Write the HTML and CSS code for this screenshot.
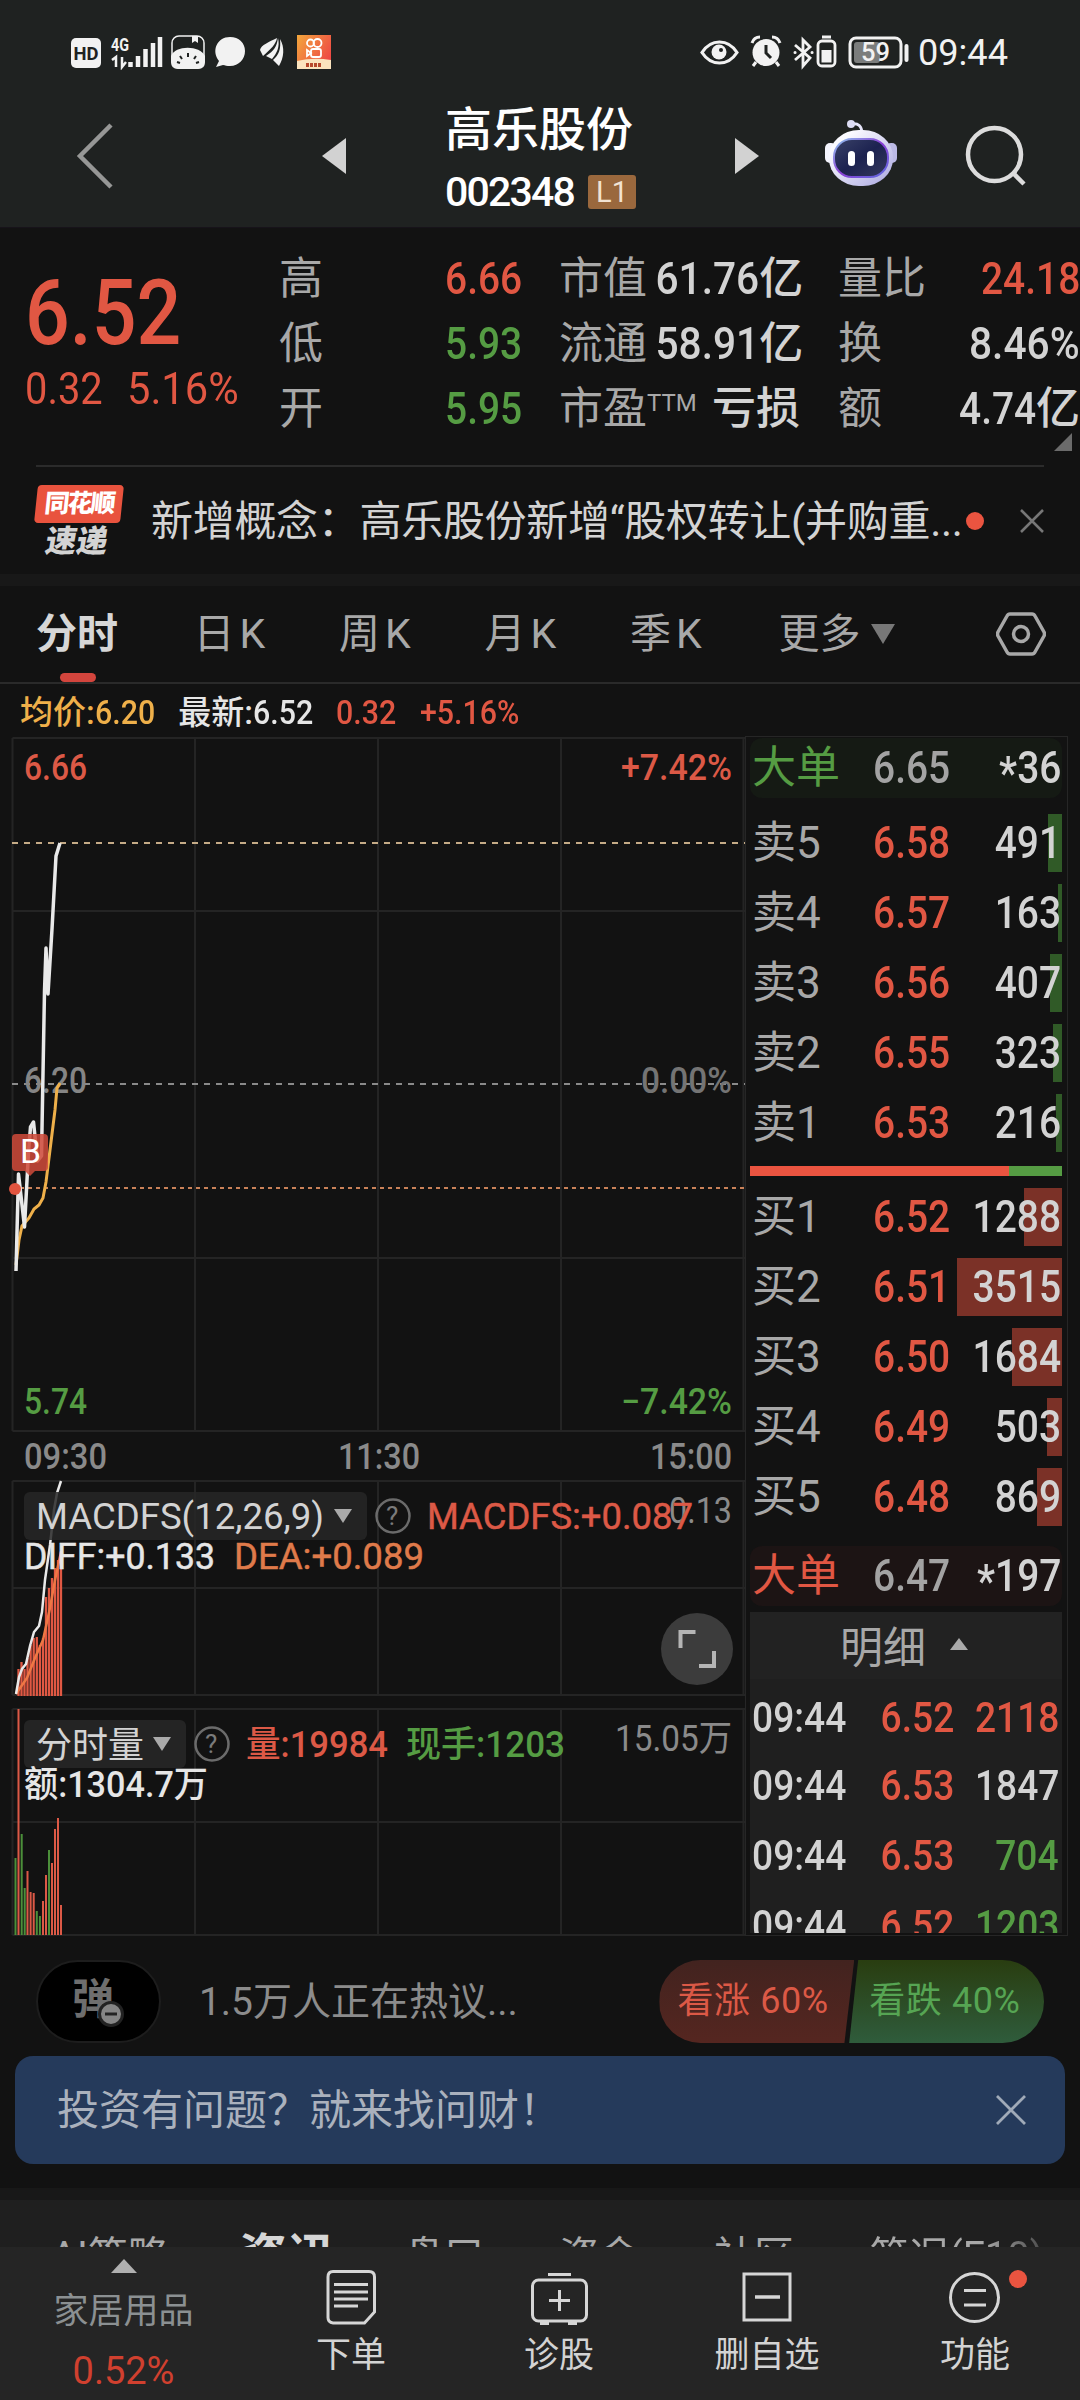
FILE: index.html
```html
<!DOCTYPE html>
<html lang="zh-CN">
<head>
  <meta charset="UTF-8">
  <meta name="viewport" content="width=device-width, initial-scale=1.0">
  <link rel="stylesheet" href="styles.css">
  <title>高乐股份 002348</title>
</head>
<body>
  <div class="phone">
    <!-- Status bar -->
    <div class="status-bar">
      <svg class="status-left" width="262" height="36" viewBox="70 34 262 36">
        <rect x="71" y="38" width="30" height="30" rx="5" fill="#f2f2f2"/>
        <text x="73.500" y="60" font-size="19" font-weight="700" fill="#1f2221" textLength="25" lengthAdjust="spacingAndGlyphs">HD</text>
        <text x="111" y="51" font-size="18" font-weight="700" fill="#f2f2f2" textLength="18" lengthAdjust="spacingAndGlyphs">4G</text>
        <path d="M112 60l4-3v10M122 57v10l4-5" fill="none" stroke="#f2f2f2" stroke-width="2.500"/>
        <path d="M130.500 67v-5M138 67v-11M145.500 67v-18M153 67v-24M160 67v-30" stroke="#f2f2f2" stroke-width="4.500"/>
        <rect x="172" y="36" width="32" height="32" rx="7" fill="none" stroke="#f2f2f2" stroke-width="1.500"/>
        <path d="M192 36h6v7l-3-2-3 2z" fill="#f2f2f2"/>
        <path d="M171 56c4-11 29-11 34 0v6q0 7-7 7h-20q-7 0-7-7z" fill="#f2f2f2"/>
        <path d="M188 53v4M180 56l2 3M196 56l-2 3M177 62l3 1M199 62l-3 1" stroke="#1f2221" stroke-width="2"/>
        <path d="M230 37c9 0 15 6 15 14s-6 15-15 15c-3 0-5-.5-7-1l-7 2 3-6c-8-10-2-24 11-24z" fill="#f2f2f2"/>
        <path d="M260 50c1-5 9-8 17-12-1 6-6 11-14 18zM266 56c8-5 11-10 12-18 2 9-1 15-6 21zM273 60c6-5 8-11 7-21 5 8 4 19-1 27z" fill="#f2f2f2"/>
        <defs>
          <linearGradient id="app" x1="0" y1="0" x2="1" y2=".6"><stop offset="0" stop-color="#f3a73c"/><stop offset="1" stop-color="#ee4a45"/></linearGradient>
        </defs>
        <rect x="297" y="35" width="34" height="34" fill="url(#app)"/>
        <g fill="none" stroke="#fff" stroke-width="1.800"><circle cx="310.500" cy="43" r="3.500"/><circle cx="317.500" cy="43" r="4"/><rect x="311" y="49" width="10" height="8" rx="2"/><path d="M311 53l-4-3v6z"/></g>
        <path d="M297 61q16-4 34-1v9h-34z" fill="#fbe3bd"/>
        <path d="M306 65h16" stroke="#b8482b" stroke-width="4" stroke-dasharray="3 1"/>
      </svg>
      <svg class="status-right" width="310" height="36" viewBox="700 34 310 36">
        <path d="M702 52.500c9-14 26-14 35 0-9 14-26 14-35 0z" fill="none" stroke="#f2f2f2" stroke-width="3.200"/>
        <circle cx="719" cy="52" r="7.500" fill="#f2f2f2"/><circle cx="721" cy="50" r="2" fill="#1f2221"/>
        <circle cx="766" cy="52.500" r="13.500" fill="#f2f2f2"/>
        <path d="M752 43q2-6 8-6M780 43q-2-6-8-6M756 62l-3 4M776 62l3 4" stroke="#f2f2f2" stroke-width="3" fill="none"/>
        <path d="M766 45v8l5 5" stroke="#1f2221" stroke-width="3" fill="none"/>
        <path d="M795 45l15 13-7 8V40l7 7-15 13" fill="none" stroke="#f2f2f2" stroke-width="2.800"/>
        <path d="M795 52.500h.1M812 52.500h.1" stroke="#f2f2f2" stroke-width="3" stroke-linecap="round"/>
        <rect x="818" y="41" width="17" height="25" rx="4" fill="none" stroke="#f2f2f2" stroke-width="2.800"/>
        <path d="M822 37h9" stroke="#f2f2f2" stroke-width="3"/><rect x="821.500" y="50" width="10" height="12.500" fill="#f2f2f2"/>
        <rect x="850" y="38" width="51" height="29" rx="6" fill="none" stroke="#f2f2f2" stroke-width="3"/>
        <rect x="854" y="42" width="26" height="21" rx="3" fill="#7b7d7c"/>
        <path d="M906.500 46v14" stroke="#f2f2f2" stroke-width="4" stroke-linecap="round"/>
        <text x="861" y="61" font-size="26" font-weight="500" fill="#f2f2f2" textLength="29" lengthAdjust="spacingAndGlyphs">59</text>
        <text x="918" y="65" font-size="36" fill="#f2f2f2" textLength="90" lengthAdjust="spacingAndGlyphs">09:44</text>
      </svg>
    </div>

    <!-- Title bar -->
    <div class="title-bar">
      <svg class="back" width="40" height="68" viewBox="0 0 40 68"><path d="M36 3L5 34l31 31" fill="none" stroke="#969796" stroke-width="4.500"/></svg>
      <svg class="prev" width="24" height="36" viewBox="0 0 24 36"><path d="M24 0v36L0 18z" fill="#d2d2d2"/></svg>
      <div class="stock">
        <div class="stock-name">高乐股份</div>
        <div class="stock-code"><span>002348</span><span class="level">L1</span></div>
      </div>
      <svg class="next" width="24" height="36" viewBox="0 0 24 36"><path d="M0 0v36l24-18z" fill="#d2d2d2"/></svg>
      <svg class="robot" width="74" height="68" viewBox="824 119 74 68">
        <defs>
          <linearGradient id="head" x1="0" y1="0" x2="1" y2="1"><stop offset=".2" stop-color="#fafaff"/><stop offset="1" stop-color="#a9a6e0"/></linearGradient>
          <linearGradient id="face" x1="0" y1="0" x2="1" y2="1"><stop offset="0" stop-color="#3a4268"/><stop offset=".5" stop-color="#1c2250"/><stop offset="1" stop-color="#35395c"/></linearGradient>
          <linearGradient id="rim" x1="0" y1="0" x2="1" y2="1"><stop offset="0" stop-color="#8fc7ee"/><stop offset=".5" stop-color="#8b3fd6"/><stop offset="1" stop-color="#5d6be0"/></linearGradient>
        </defs>
        <path d="M851 124q11-2 11 10" fill="none" stroke="#e6e6fa" stroke-width="3"/>
        <circle cx="851" cy="124" r="4" fill="#dcdcf4"/>
        <rect x="825" y="143" width="11" height="20" rx="5" fill="#f4f4fd"/><rect x="886" y="143" width="11" height="20" rx="5" fill="#bcbae6"/>
        <rect x="829" y="130" width="64" height="56" rx="30" ry="27" fill="url(#head)"/>
        <rect x="834" y="133" width="54" height="38" rx="18" transform="translate(0 6)" fill="url(#face)" stroke="url(#rim)" stroke-width="2"/>
        <rect x="848" y="151" width="7" height="15" rx="3.500" fill="#fff"/><rect x="867" y="151" width="7" height="15" rx="3.500" fill="#fff"/>
      </svg>
      <svg class="search" width="62" height="62" viewBox="965 125 62 62"><circle cx="994.500" cy="154.500" r="26.500" fill="none" stroke="#dcdcdc" stroke-width="4.500"/><path d="M1013 173l11 11" stroke="#dcdcdc" stroke-width="4.500"/></svg>
    </div>

    <!-- Quote -->
    <div class="quote">
      <div class="quote-now red">
        <div class="big"><span class="num left">6.52</span></div>
        <div class="change"><span class="num left">0.32</span><span class="num left wide">5.16%</span></div>
      </div>
      <div class="pairs">
        <div><span>高</span><b class="red"><i class="num">6.66</i></b></div>
        <div><span>低</span><b class="green"><i class="num">5.93</i></b></div>
        <div><span>开</span><b class="green"><i class="num">5.95</i></b></div>
      </div>
      <div class="pairs">
        <div><span>市值</span><b><i class="num wide">61.76</i>亿</b></div>
        <div><span>流通</span><b><i class="num wide">58.91</i>亿</b></div>
        <div><span>市盈<sup>TTM</sup></span><b>亏损</b></div>
      </div>
      <div class="pairs">
        <div><span>量比</span><b class="red"><i class="num">24.18</i></b></div>
        <div><span>换</span><b><i class="num wide">8.46%</i></b></div>
        <div><span>额</span><b><i class="num">4.74</i>亿</b></div>
      </div>
      <div class="corner"></div>
    </div>

    <!-- News strip -->
    <div class="news">
      <div class="news-logo">
        <div class="logo-top">同花顺</div>
        <div class="logo-bottom">速递</div>
      </div>
      <div class="news-text">新增概念：高乐股份新增“股权转让(并购重...</div>
      <div class="dot"></div>
      <svg width="24" height="24" viewBox="0 0 24 24"><path d="M1 1l22 22M23 1L1 23" stroke="#777" stroke-width="2.500"/></svg>
    </div>
    <div class="band"></div>

    <!-- Period tabs -->
    <div class="tabs">
      <div class="tab active">分时</div>
      <div class="tab">日<span>K</span></div>
      <div class="tab">周<span>K</span></div>
      <div class="tab">月<span>K</span></div>
      <div class="tab">季<span>K</span></div>
      <div class="tab more">更多</div>
      <svg class="tri" width="24" height="20" viewBox="0 0 24 20"><path d="M0 0h24L12 20z" fill="#777"/></svg>
      <svg class="gear" width="50" height="46" viewBox="0 0 50 46"><path d="M14 3h22q2 0 3 2l9 16q1 2 0 4l-9 16q-1 2-3 2H14q-2 0-3-2L2 25q-1-2 0-4l9-16q1-2 3-2z" fill="none" stroke="#a8a8a8" stroke-width="3.500"/><circle cx="25" cy="23" r="7.500" fill="none" stroke="#a8a8a8" stroke-width="3.500"/></svg>
    </div>

    <div class="legend">
      <span class="yellow">均价:<i class="num left">6.20</i></span>
      <span>最新:<i class="num left">6.52</i></span>
      <span class="red"><i class="num left">0.32</i></span>
      <span class="red"><i class="num left">+5.16%</i></span>
    </div>

    <div class="main">
      <!-- Minute chart, MACD and volume share one time axis -->
      <svg class="charts" width="745" height="1200" viewBox="0 736 745 1200">
        <g fill="none" stroke="#242424" stroke-width="2">
          <path d="M12.500 738H745M12.500 1431H745M12.500 738V1431M195 738V1431M378 738V1431M561 738V1431M743.500 738V1431M12.500 911H745M12.500 1258H745"/>
          <path d="M12.500 1481H745M12.500 1695H745M12.500 1588H745M12.500 1481V1695M195 1481V1695M378 1481V1695M561 1481V1695M743.500 1481V1695"/>
          <path d="M12.500 1709H745M12.500 1935H745M12.500 1822H745M12.500 1709V1935M195 1709V1935M378 1709V1935M561 1709V1935M743.500 1709V1935"/>
        </g>
        <path d="M12 843H745" stroke="#c5ab87" stroke-width="2" stroke-dasharray="6 6"/>
        <path d="M12 1084H745" stroke="#8a8a8a" stroke-width="2" stroke-dasharray="6 6"/>
        <path d="M12 1188H745" stroke="#c98158" stroke-width="2" stroke-dasharray="4 4"/>

        <g font-size="36" font-weight="500">
          <text x="24" y="780" fill="#dc5946" textLength="63" lengthAdjust="spacingAndGlyphs">6.66</text>
          <text x="621" y="780" fill="#dc5946" textLength="111" lengthAdjust="spacingAndGlyphs">+7.42%</text>
          <text x="24" y="1093" fill="#858585" textLength="63" lengthAdjust="spacingAndGlyphs">6.20</text>
          <text x="641" y="1093" fill="#747474" textLength="91" lengthAdjust="spacingAndGlyphs">0.00%</text>
          <text x="24" y="1414" fill="#559c43" textLength="63" lengthAdjust="spacingAndGlyphs">5.74</text>
          <text x="621" y="1414" fill="#559c43" textLength="111" lengthAdjust="spacingAndGlyphs">−7.42%</text>
          <text x="24" y="1469" fill="#8a8a8a" textLength="83" lengthAdjust="spacingAndGlyphs">09:30</text>
          <text x="338" y="1469" fill="#8a8a8a" textLength="82" lengthAdjust="spacingAndGlyphs">11:30</text>
          <text x="650" y="1469" fill="#8a8a8a" textLength="82" lengthAdjust="spacingAndGlyphs">15:00</text>
        </g>

        <path d="M16 1265l3-25 3-14 7-8 5-9 5-4 4-7 3-16 4-32 5-40 2-22 3-5" fill="none" stroke="#efb04a" stroke-width="3"/>
        <path d="M16 1271l2.500-97 6 53 4-75 2-25 3-5 4 39 4-5 3-165 1.500-43 2 46 4-65 4-73 4-13" fill="none" stroke="#e9e9e9" stroke-width="3.500" stroke-linejoin="round"/>
        <circle cx="15" cy="1189" r="6" fill="#e1543f"/>
        <path d="M16 1134h28q4 0 4 4v29q0 4-4 4h-9l-5 5-5-5h-9q-4 0-4-4v-29q0-4 4-4z" fill="#cf4a3a" fill-opacity=".86"/>
        <text x="20" y="1163" font-size="33" fill="#fff" textLength="21" lengthAdjust="spacingAndGlyphs">B</text>

        <!-- MACD -->
        <path d="M18.500 1696v-27M21.500 1696v-34M24.500 1696v-27M27.500 1696v-38M30.600 1696v-51M33.700 1696v-58M36.800 1696v-59M39.900 1696v-51M43 1696v-58M46 1696v-99M49 1696v-108M52 1696v-118M55 1696v-128M58 1696v-136M61 1696v-145" stroke="#e05843" stroke-width="2.300"/>
        <path d="M16 1694l11-16 8-20 8-18 7-32 5-28 6-28" fill="none" stroke="#ee7744" stroke-width="2.500"/>
        <path d="M16 1694l3-17 3-8 4-5 4-18 4-14 5-6 3-14 3-32 5-35 4-35 3-17 4-12" fill="none" stroke="#e9e9e9" stroke-width="2.500"/>
        <rect x="24" y="1492" width="343" height="48" rx="6" fill="#272727" fill-opacity=".85"/>
        <text x="36" y="1529" font-size="37" fill="#d3d3d3" textLength="288" lengthAdjust="spacingAndGlyphs">MACDFS(12,26,9)</text>
        <path d="M334 1509h18l-9 14z" fill="#aaa"/>
        <circle cx="393" cy="1516" r="16.500" fill="none" stroke="#6b6b6b" stroke-width="2.500"/>
        <text x="386" y="1525" font-size="26" fill="#7b7b7b">?</text>
        <text x="669" y="1523" font-size="36" fill="#8a8a8a" textLength="63" lengthAdjust="spacingAndGlyphs">0.13</text>
        <text x="427" y="1529" font-size="37" fill="#dc5946" stroke="#dc5946" stroke-width=".5" textLength="266" lengthAdjust="spacingAndGlyphs">MACDFS:+0.087</text>
        <text x="24" y="1569" font-size="37" fill="#e6e6e6" stroke="#e6e6e6" stroke-width=".5" textLength="191" lengthAdjust="spacingAndGlyphs">DIFF:+0.133</text>
        <text x="234" y="1569" font-size="37" fill="#df7a4a" stroke="#df7a4a" stroke-width=".5" textLength="190" lengthAdjust="spacingAndGlyphs">DEA:+0.089</text>
        <circle cx="697" cy="1649" r="36" fill="#3c3c3c"/>
        <path d="M680.500 1648v-16h15M714 1651v15h-15" fill="none" stroke="#b5b5b5" stroke-width="4"/>

        <!-- Volume -->
        <path d="M15.500 1935v-77M21.700 1935v-101M24.700 1935v-47M36.800 1935v-24M39.900 1935v-19M49 1935v-85" stroke="#4b8f3a" stroke-width="2"/>
        <path d="M18.500 1935v-226M27.500 1935v-64M30.600 1935v-43M33.700 1935v-42M43 1935v-34M46 1935v-60M52 1935v-72M55 1935v-106M58 1935v-117M61 1935v-30" stroke="#dc5946" stroke-width="2"/>
        <rect x="24" y="1720" width="162" height="48" rx="6" fill="#272727" fill-opacity=".9"/>
        <text x="36" y="1758" font-size="36" fill="#d3d3d3">分时量</text>
        <path d="M153 1737h18l-9 14z" fill="#aaa"/>
        <circle cx="212" cy="1744" r="16.500" fill="none" stroke="#6b6b6b" stroke-width="2.500"/>
        <text x="205" y="1753" font-size="26" fill="#7b7b7b">?</text>
        <text x="246" y="1757" font-size="36" font-weight="500" fill="#dc5946" textLength="142" lengthAdjust="spacingAndGlyphs">量:19984</text>
        <text x="406" y="1757" font-size="36" font-weight="500" fill="#559c43" textLength="159" lengthAdjust="spacingAndGlyphs">现手:1203</text>
        <text x="615" y="1751" font-size="36" fill="#8a8a8a" textLength="117" lengthAdjust="spacingAndGlyphs">15.05万</text>
        <text x="24" y="1797" font-size="36" font-weight="500" fill="#e6e6e6" textLength="184" lengthAdjust="spacingAndGlyphs">额:1304.7万</text>
      </svg>

      <!-- Order book -->
      <div class="book">
        <div class="level-row block sell"><span class="green">大单</span><b class="gray"><i class="num">6.65</i></b><b><i class="num"><small>*</small>36</i></b></div>
        <div class="levels">
          <div class="level-row"><span>卖5</span><b class="red"><i class="num">6.58</i></b><b><i class="num">491</i></b><div class="bar ask" style="width:14px"></div></div>
          <div class="level-row"><span>卖4</span><b class="red"><i class="num">6.57</i></b><b><i class="num">163</i></b><div class="bar ask" style="width:4px"></div></div>
          <div class="level-row"><span>卖3</span><b class="red"><i class="num">6.56</i></b><b><i class="num">407</i></b><div class="bar ask" style="width:12px"></div></div>
          <div class="level-row"><span>卖2</span><b class="red"><i class="num">6.55</i></b><b><i class="num">323</i></b><div class="bar ask" style="width:9px"></div></div>
          <div class="level-row"><span>卖1</span><b class="red"><i class="num">6.53</i></b><b><i class="num">216</i></b><div class="bar ask" style="width:6px"></div></div>
        </div>
        <div class="ratio"><div style="width:83%"></div></div>
        <div class="levels">
          <div class="level-row"><span>买1</span><b class="red"><i class="num">6.52</i></b><b><i class="num">1288</i></b><div class="bar bid" style="width:38px"></div></div>
          <div class="level-row"><span>买2</span><b class="red"><i class="num">6.51</i></b><b><i class="num">3515</i></b><div class="bar bid" style="width:105px"></div></div>
          <div class="level-row"><span>买3</span><b class="red"><i class="num">6.50</i></b><b><i class="num">1684</i></b><div class="bar bid" style="width:50px"></div></div>
          <div class="level-row"><span>买4</span><b class="red"><i class="num">6.49</i></b><b><i class="num">503</i></b><div class="bar bid" style="width:15px"></div></div>
          <div class="level-row"><span>买5</span><b class="red"><i class="num">6.48</i></b><b><i class="num">869</i></b><div class="bar bid" style="width:25px"></div></div>
        </div>
        <div class="level-row block buy"><span class="red">大单</span><b class="gray"><i class="num">6.47</i></b><b><i class="num"><small>*</small>197</i></b></div>
        <div class="detail-head">明细<svg width="18" height="12" viewBox="0 0 18 12"><path d="M0 12h18L9 0z" fill="#aaa"/></svg></div>
        <div class="details">
          <div class="trade"><i class="num left">09:44</i><b class="red"><i class="num">6.52</i></b><b class="red"><i class="num">2118</i></b></div>
          <div class="trade"><i class="num left">09:44</i><b class="red"><i class="num">6.53</i></b><b><i class="num">1847</i></b></div>
          <div class="trade"><i class="num left">09:44</i><b class="red"><i class="num">6.53</i></b><b class="green"><i class="num">704</i></b></div>
          <div class="trade"><i class="num left">09:44</i><b class="red"><i class="num">6.52</i></b><b class="green"><i class="num">1203</i></b></div>
        </div>
      </div>
    </div>

    <!-- Discussion and vote -->
    <div class="discuss">
      <div class="danmu">弹<svg width="26" height="28" viewBox="0 0 26 28"><circle cx="13" cy="14" r="11.500" fill="#858585" stroke="#222" stroke-width="3"/><path d="M7 14h12" stroke="#222" stroke-width="3"/></svg></div>
      <div class="talk">1.5万人正在热议...</div>
      <div class="vote">
        <div class="vote-up">看涨 60%</div>
        <div class="vote-down">看跌 40%</div>
      </div>
    </div>

    <div class="banner">
      <span>投资有问题？就来找问财！</span>
      <svg width="30" height="30" viewBox="0 0 30 30"><path d="M1 1l28 28M29 1L1 29" stroke="#a0aab8" stroke-width="2.800"/></svg>
    </div>
    <div class="band low"></div>

    <div class="sections">
      <span>AI策略</span><span class="active">资讯</span><span>盘口</span><span>资金</span><span>社区</span><span class="last">简况(F10)</span>
    </div>

    <!-- Bottom navigation -->
    <div class="nav">
      <div class="industry">
        <svg width="26" height="14" viewBox="0 0 26 14"><path d="M0 14h26L13 0z" fill="#b0b0b0"/></svg>
        <span>家居用品</span>
        <em>0.52%</em>
      </div>
      <div class="nav-item">
        <svg width="60" height="60" viewBox="322 2266 60 60"><path d="M334 2271.500h36q5.500 0 5.500 5.500v35l-10 11h-31.500q-5-.5-5-5.500v-40.500q0-5.500 5-5.500zM335 2284.500h34M335 2292h34M335 2299h34M335 2306h24" fill="none" stroke="#d6d6d6" stroke-width="3"/></svg>
        <span>下单</span>
      </div>
      <div class="nav-item">
        <svg width="60" height="60" viewBox="529 2266 60 60"><rect x="532.500" y="2280" width="54" height="41" rx="6" fill="none" stroke="#d6d6d6" stroke-width="3"/><path d="M548 2274.500h23M559.500 2290v21M549 2300.500h21M540 2323.500h9M568 2323.500h9" fill="none" stroke="#d6d6d6" stroke-width="3"/></svg>
        <span>诊股</span>
      </div>
      <div class="nav-item">
        <svg width="60" height="60" viewBox="737 2266 60 60"><rect x="744" y="2274" width="46" height="46" fill="none" stroke="#d6d6d6" stroke-width="3"/><path d="M755 2297h25" stroke="#d6d6d6" stroke-width="3.500"/></svg>
        <span>删自选</span>
      </div>
      <div class="nav-item">
        <svg width="60" height="60" viewBox="946 2266 60 60"><circle cx="975.500" cy="2297.500" r="24" fill="none" stroke="#d6d6d6" stroke-width="3"/><path d="M965 2290.500h22M965 2305h22" stroke="#d6d6d6" stroke-width="3"/></svg>
        <span>功能</span>
        <div class="dot badge"></div>
      </div>
    </div>
  </div>
</body>
</html>
```
FILE: styles.css
```css
* {
  box-sizing: border-box;
}

body {
  margin: 0;
  background-color: #121212;
  font-family: Roboto, "Noto Sans CJK SC", sans-serif;
  color: #d3d3d3;
}

svg {
  display: block;
  flex: none;
}

.phone {
  width: 1080px;
  height: 2400px;
  overflow: hidden;
  white-space: nowrap;
}

b, i, em {
  font-weight: 500;
  font-style: normal;
}

/* Slightly condensed figures */
.num {
  display: inline-block;
  transform: scaleX(0.885);
  transform-origin: right center;
}

.num.left {
  transform-origin: left center;
}

.num.wide {
  transform: scaleX(0.925);
}

.red { color: #e15743; }
.green { color: #559c43; }
.gray { color: #a3a3a3; }
.yellow { color: #efb04a; }

.dot {
  width: 18px;
  height: 18px;
  border-radius: 50%;
  background-color: #ea5440;
}

/* Status bar */
.status-bar {
  height: 84px;
  padding: 34px 70px 0;
  display: flex;
  justify-content: space-between;
  background-color: #1f2221;
}

/* Title bar */
.title-bar {
  height: 144px;
  display: flex;
  align-items: flex-start;
  background-color: #1f2221;
  border-bottom: 1px solid #17131a;
}

.back { margin: 38px 0 0 75px; }
.prev { margin: 54px 0 0 207px; }
.next { margin: 54px 0 0 98px; }
.robot { margin: 35px 0 0 65px; }
.search { margin: 41px 0 0 67px; }

.stock {
  width: 192px;
  margin-left: 99px;
  color: #fff;
}

.stock-name {
  height: 92px;
  line-height: 92px;
  font-size: 47px;
  font-weight: 500;
}

.stock-code {
  height: 32px;
  display: flex;
  align-items: center;
  font-size: 41px;
  font-weight: 500;
  letter-spacing: -1.800px;
}

.level {
  width: 48px;
  height: 34px;
  margin-left: 14px;
  border-radius: 3px;
  background-color: #9a683d;
  color: #f2e3d3;
  font-size: 29px;
  font-weight: 400;
  line-height: 34px;
  text-align: center;
  letter-spacing: 0;
}

/* Quote */
.quote {
  height: 239px;
  margin-left: 25px;
  padding-top: 18px;
  display: grid;
  grid-template-columns: 254px 243px 37px 241px 38px 242px;
  position: relative;
}

.quote::after {
  content: "";
  position: absolute;
  left: 11px;
  right: 36px;
  bottom: 0;
  height: 2px;
  background-color: #2b2b2b;
}

.pairs:nth-child(2) { grid-column: 2; }
.pairs:nth-child(3) { grid-column: 4; }
.pairs:nth-child(4) { grid-column: 6; }

.big {
  height: 106px;
  padding-top: 15px;
  font-size: 90px;
  font-weight: 500;
  line-height: 106px;
}

.big .num {
  transform: scaleX(0.875);
}

.change {
  display: flex;
  gap: 14px;
  height: 73px;
  font-size: 45px;
  line-height: 74px;
}

.pairs > div {
  height: 65px;
  display: flex;
  justify-content: space-between;
  font-size: 44px;
  line-height: 67px;
}

.pairs span {
  color: #a8a8a8;
}

.pairs sup {
  font-size: 24px;
  line-height: 1;
  vertical-align: 13px;
}

.corner {
  position: absolute;
  right: 8px;
  bottom: 16px;
  border-left: 18px solid transparent;
  border-bottom: 18px solid #6b6b6b;
}

/* News strip */
.news {
  height: 107px;
  padding-left: 36px;
  display: flex;
  align-items: center;
}

.news-logo {
  width: 90px;
  font-weight: 900;
}

.logo-top {
  width: 86px;
  height: 38px;
  border-radius: 4px;
  background-color: #e9533e;
  color: #fff;
  font-size: 25px;
  line-height: 37px;
  text-align: center;
  letter-spacing: -2px;
  transform: skewX(-6deg);
}

.logo-bottom {
  height: 34px;
  padding-left: 10px;
  font-size: 31px;
  line-height: 38px;
  transform: skewX(-10deg);
}

.news-text {
  width: 838px;
  margin-left: 25px;
  margin-top: -7px;
  font-size: 42px;
  letter-spacing: -0.300px;
}

.news .dot {
  margin-left: -23px;
}

.news svg {
  margin-left: 36px;
}

.band {
  height: 12px;
  background-color: #181818;
}

/* Period tabs */
.tabs {
  height: 98px;
  padding-left: 36px;
  display: flex;
  align-items: center;
  border-bottom: 2px solid #2a2a2a;
  font-size: 41px;
  color: #a8a8a8;
}

.tab {
  width: 145.500px;
  height: 96px;
  line-height: 97px;
}

.tab:nth-child(2) { margin-left: 12px; }

.tab span {
  margin-left: 5px;
}

.tab.active {
  position: relative;
  color: #d6d6d6;
  font-weight: 700;
}

.tab.active::after {
  content: "";
  position: absolute;
  left: 24px;
  bottom: 0;
  width: 36px;
  height: 9px;
  border-radius: 5px;
  background-color: #d3453d;
}

.tab.more { width: 92px; margin-left: 3px; }
.gear { margin-left: 101px; }

/* Legend */
.legend {
  height: 52px;
  padding-left: 20px;
  display: flex;
  font-size: 33px;
  font-weight: 500;
  line-height: 58px;
  color: #e6e6e6;
}

.legend span {
  margin-right: 18px;
}

.legend .num {
  transform: scaleX(0.92);
}

.main {
  height: 1200px;
  display: flex;
}

/* Order book */
.book {
  width: 323px;
  height: 1200px;
  padding: 1px 5px 0 4px;
  border: 1px solid #262626;
}

.level-row {
  height: 58px;
  padding: 0 1px 0 2px;
  display: grid;
  grid-template-columns: 82px 116px 1fr;
  align-items: center;
  position: relative;
  font-size: 44px;
  line-height: 56px;
}

.level-row span {
  color: #a8a8a8;
}

.level-row b, .trade b {
  text-align: right;
  z-index: 1;
}

.level-row .red { color: #e15743; }
.level-row .green { color: #559c43; }

.level-row small {
  font-size: 46px;
  vertical-align: -6px;
  line-height: 1;
}

.block {
  height: 60px;
  border-radius: 12px;
  line-height: 58px;
}

.block.sell { background-color: #151a14; }
.block.buy { background-color: #1c1414; margin-top: 20px; }

.levels {
  display: grid;
  gap: 12px;
  margin-top: 16px;
}

.ratio + .levels {
  margin-top: 12px;
}

.bar {
  position: absolute;
  right: 0;
  top: 0;
  height: 58px;
}

.bar.ask { background-color: #305a27; }
.bar.bid { background-color: #7b3127; }

.ratio {
  height: 10px;
  margin-top: 14px;
  background-color: #559c43;
}

.ratio div {
  height: 10px;
  background-color: #ea5440;
}

.detail-head {
  height: 67px;
  margin-top: 6px;
  padding: 0 4px 4px 0;
  display: flex;
  align-items: center;
  justify-content: center;
  gap: 24px;
  background-color: #222;
  color: #a8a8a8;
  font-size: 43px;
}

.details {
  height: 254px;
  padding-top: 4px;
  overflow: hidden;
  background-color: #1f1f1f;
}

.trade {
  height: 70px;
  padding: 0 3px 0 2px;
  display: grid;
  grid-template-columns: 112px 90px 1fr;
  font-size: 42px;
  line-height: 70px;
}

.trade:first-child {
  height: 68px;
}

/* Discussion */
.discuss {
  height: 120px;
  padding: 24px 36px 0;
  display: flex;
}

.danmu {
  position: relative;
  width: 125px;
  height: 83px;
  padding-left: 34px;
  border: 2px solid #1d1d1d;
  border-radius: 42px;
  background-color: #000;
  color: #6e6e6e;
  font-size: 42px;
  font-weight: 700;
  line-height: 76px;
}

.danmu svg {
  position: absolute;
  left: 60px;
  top: 38px;
}

.talk {
  width: 461px;
  margin-left: 38px;
  color: #8c8c8c;
  font-size: 39px;
  line-height: 85px;
}

.vote {
  display: flex;
  width: 385px;
  height: 83px;
  border-radius: 42px;
  overflow: hidden;
  font-size: 36px;
  line-height: 83px;
  letter-spacing: 0.600px;
}

.vote-up {
  width: 195px;
  padding-left: 18px;
  background: linear-gradient(#42231f, #552620);
  clip-path: polygon(0 0, 100% 0, 185px 100%, 0 100%);
  color: #dc5946;
}

.vote-down {
  width: 195px;
  margin-left: -5px;
  padding-left: 20px;
  background: linear-gradient(#293d10, #2f5c3c);
  clip-path: polygon(9px 0, 100% 0, 100% 100%, 0 100%);
  color: #56a553;
}

.banner {
  height: 108px;
  margin: 0 15px;
  padding: 0 39px 0 42px;
  display: flex;
  align-items: center;
  justify-content: space-between;
  border-radius: 18px;
  background-color: #253a5b;
  color: #aab1bd;
  font-size: 42px;
}

.banner span {
  margin-top: -7px;
}

.band.low {
  margin-top: 24px;
}

/* Info sections, cut by the bottom bar */
.sections {
  height: 47px;
  padding-left: 51px;
  display: flex;
  overflow: hidden;
  background-color: #1f1f1f;
  color: #a8a8a8;
  font-size: 40px;
  line-height: 114px;
}

.sections span {
  width: 155px;
}

.sections span:first-child { width: 188px; }

.sections .active {
  width: 165px;
  color: #d6d6d6;
  font-size: 48px;
  font-weight: 700;
}

.sections .last {
  width: 190px;
  background: linear-gradient(90deg, #a8a8a8 60%, #333);
  background-clip: text;
  color: transparent;
}

/* Bottom navigation */
.nav {
  height: 153px;
  display: flex;
  background-color: #252525;
  font-size: 35px;
}

.industry {
  width: 247px;
  padding-top: 12px;
  display: flex;
  flex-direction: column;
  align-items: center;
  color: #8b9092;
}

.industry span {
  line-height: 77px;
}

.industry em {
  font-size: 38px;
  font-weight: 400;
  line-height: 43px;
  color: #d0402f;
}

.nav-item {
  width: 208px;
  padding-top: 19px;
  display: flex;
  flex-direction: column;
  align-items: center;
  position: relative;
}

.nav-item span {
  line-height: 60px;
}

.badge {
  position: absolute;
  left: 138px;
  top: 23px;
}
```
